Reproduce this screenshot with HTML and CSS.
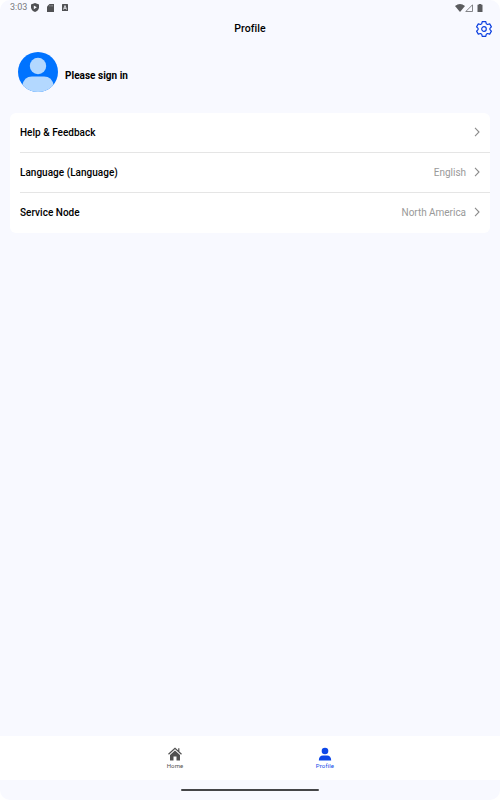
FILE: index.html
```
<!DOCTYPE html>
<html lang="en">
<head>
  <meta charset="UTF-8">
  <meta name="viewport" content="width=device-width, initial-scale=1.0">
  <title>Profile</title>
  <link rel="stylesheet" href="styles.css">
</head>
<body>
  <div class="screen">
    <div class="status-bar">
      <div class="status-left">
        <span class="time">3:03</span>
        <svg class="shield" width="8" height="9" viewBox="0 0 8 9"><path d="M4 0L8 1.4V4.200C8 6.500 6.300 8.300 4 9C1.700 8.300 0 6.500 0 4.200V1.400Z" fill="#505154"/><path d="M2.800 2.400L5.800 4.300L2.800 6.200Z" fill="#f8f9ff"/></svg>
        <svg class="card" width="7" height="8" viewBox="0 0 7 8"><path d="M2.500 0H7V8H0V2.500Z" fill="#505154"/><path d="M2.800 1V2.500M4.200 1V2.500M5.600 1V2.500" stroke="#aaabb0" stroke-width=".6"/></svg>
        <svg class="badge" width="6" height="7" viewBox="0 0 6 7"><rect width="6" height="7" rx=".5" fill="#505154"/><path d="M1.500 5.500L3 1.500L4.500 5.500M2 4.300H4" fill="none" stroke="#f8f9ff" stroke-width=".8"/></svg>
      </div>
      <div class="status-right">
        <svg width="10" height="8" viewBox="0 0 10 8"><path d="M0 2Q5-2 10 2L5 8Z" fill="#5a5b5e"/></svg>
        <svg class="signal" width="8" height="8" viewBox="0 0 8 8"><path d="M7.500 .8V7.500H.8Z" fill="none" stroke="#66676b" stroke-width=".8"/></svg>
        <svg class="battery" width="6" height="8" viewBox="0 0 6 8"><path d="M1.700 0H4.300V.8H5.500V8H.5V.8H1.700Z" fill="#5a5b5e"/></svg>
      </div>
    </div>

    <div class="header">
      <h1>Profile</h1>
      <svg class="settings" width="16" height="16" viewBox="0 0 16 16" fill="none" stroke="#0b3fe0" stroke-width="1.200" stroke-linejoin="round">
        <path d="M6.200 .6H9.800L10.300 2.800L11.500 3.500L13.700 2.900L15.400 5.900L13.900 7.400V8.600L15.400 10.100L13.700 13.100L11.500 12.500L10.300 13.200L9.800 15.400H6.200L5.700 13.200L4.500 12.500L2.300 13.100L.6 10.100L2.100 8.600V7.400L.6 5.900L2.300 2.900L4.500 3.500L5.700 2.800Z"/>
        <circle cx="8" cy="8" r="2.300"/>
      </svg>
    </div>

    <div class="user">
      <svg class="avatar" width="40" height="40" viewBox="0 0 40 40">
        <defs><clipPath id="round"><circle cx="20" cy="20" r="20"/></clipPath></defs>
        <g clip-path="url(#round)">
          <rect width="40" height="40" fill="#0073ff"/>
          <circle cx="20" cy="14" r="8.200" fill="#b3d8ff"/>
          <path d="M4 40V34Q6 24.600 14 24.600H26Q34 24.600 36 34V40Z" fill="#b3d8ff"/>
        </g>
      </svg>
      <span class="user-name">Please sign in</span>
    </div>

    <div class="menu">
      <div class="row">
        <span class="label">Help &amp; Feedback</span>
        <svg class="arrow" width="6" height="10" viewBox="0 0 6 10"><path d="M1 .8L5 5L1 9.200"/></svg>
      </div>
      <div class="row">
        <span class="label">Language (Language)</span>
        <span class="value">English</span>
        <svg class="arrow" width="6" height="10" viewBox="0 0 6 10"><path d="M1 .8L5 5L1 9.200"/></svg>
      </div>
      <div class="row">
        <span class="label">Service Node</span>
        <span class="value">North America</span>
        <svg class="arrow" width="6" height="10" viewBox="0 0 6 10"><path d="M1 .8L5 5L1 9.200"/></svg>
      </div>
    </div>

    <div class="tabs">
      <div class="tab">
        <svg width="14" height="14" viewBox="0 0 14 14"><path d="M.5 7.300L7 1.300L13.500 7.300M10.800 1.300V4.500" fill="none" stroke="#505050" stroke-width="1.200"/><path d="M2 8L7 3.500L12 8V13.500H8.500V9.500H5.500V13.500H2Z" fill="#505050"/></svg>
        <span>Home</span>
      </div>
      <div class="tab active">
        <svg width="14" height="14" viewBox="0 0 14 14"><circle cx="7" cy="4" r="3.300" fill="#0d47e8"/><path d="M.8 13.500Q1 8.500 5 8.500H9Q13 8.500 13.200 13.500Z" fill="#0d47e8"/></svg>
        <span>Profile</span>
      </div>
    </div>

    <div class="gesture"><div class="gesture-bar"></div></div>
  </div>
</body>
</html>
```
FILE: styles.css
```
* { box-sizing: border-box; }
body { margin: 0; background: #fff; font-family: Roboto, sans-serif; color: #000; }
svg { display: block; flex: none; }
.screen { display: flex; flex-direction: column; height: 800px; background: #f8f9ff; border-radius: 10px; overflow: hidden; }

.status-bar { display: flex; justify-content: space-between; height: 15px; padding: 0 17px 0 10px; }
.status-left, .status-right { display: flex; align-items: center; }
.time { font-size: 9px; line-height: 15px; color: #77787c; letter-spacing: -0.05px; }
.shield { margin-left: 3.5px; }
.card { margin-left: 8px; }
.badge { margin-left: 8px; }
.battery { margin-left: 4px; }

.header { display: flex; align-items: center; height: 27px; padding: 0 8px 0 24px; }
h1 { flex: 1; margin: 0; font-size: 10.5px; font-weight: 500; text-align: center; letter-spacing: 0.05px; }

.user { display: flex; align-items: center; height: 70.5px; padding: 0 17px 10px 17.5px; }
.user-name { margin: 6px 0 0 7.5px; font-size: 10px; font-weight: 700; letter-spacing: 0.02px; }

.menu { margin: 0 10px; padding-left: 10px; background: #fff; border-radius: 6px; }
.row { display: flex; align-items: center; height: 40px; padding-right: 10px; border-bottom: 1px solid #e5e5e5; }
.row:last-child { border-bottom-color: transparent; }
.label { flex: 1; font-size: 10px; font-weight: 500; letter-spacing: 0.02px; }
.value { margin-right: 8px; font-size: 10px; color: #999; letter-spacing: -0.03px; }
.arrow path { fill: none; stroke: #8c8c8c; stroke-width: 1.1; }

.tabs { display: flex; justify-content: center; height: 44px; margin-top: auto; background: #fff; }
.tab { display: flex; flex-direction: column; align-items: center; width: 150px; padding-top: 11px; font-size: 6px; color: #505050; }
.tab span { margin-top: 1px; line-height: 8px; letter-spacing: 0.15px; }
.tab.active { color: #0d47e8; }

.gesture { display: flex; justify-content: center; align-items: center; height: 20px; }
.gesture-bar { width: 138px; height: 2px; border-radius: 1px; background: #444548; }
```
